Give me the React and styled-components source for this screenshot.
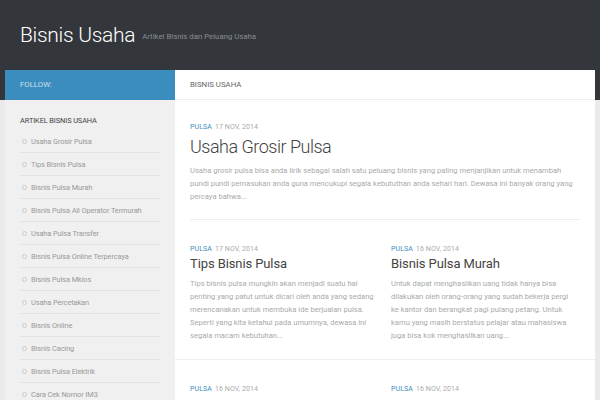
import styled, { createGlobalStyle } from 'styled-components';

const Global = createGlobalStyle`
  html, body {
    margin: 0;
    padding: 0;
  }
  body {
    font-family: Roboto, "Liberation Sans", sans-serif;
    background: #eaeaea;
  }
`;

const Page = styled.div`
  width: 600px;
  height: 400px;
  overflow: hidden;
  background: linear-gradient(#33363b 0, #33363b 100px, #eaeaea 100px);
`;

const Header = styled.header`
  height: 70px;
  display: flex;
  align-items: center;
  padding: 0 20px;
  gap: 7px;
`;

const SiteTitle = styled.h1`
  margin: 0;
  font-size: 21px;
  font-weight: 300;
  color: #fff;
  letter-spacing: -0.3px;
`;

const Tagline = styled.span`
  font-size: 7.8px;
  color: #8a8d91;
  padding-top: 3px;
`;

const Container = styled.div`
  margin: 0 5px;
  display: flex;
  height: 330px;
`;

const Sidebar = styled.aside`
  width: 170px;
  flex: none;
  background: #f0f0f0;
`;

const BarTitle = styled.div`
  height: 30px;
  display: flex;
  align-items: center;
  padding: 0 15px;
  font-size: 7.8px;
  text-transform: uppercase;
  background: ${(p) => (p.$blue ? '#3b8dbd' : '#fff')};
  color: ${(p) => (p.$blue ? 'rgba(255,255,255,0.75)' : '#666')};
  border-bottom: 1px solid ${(p) => (p.$blue ? '#3b8dbd' : '#eee')};
  box-sizing: border-box;
`;

const Widget = styled.div`
  padding: 16px 15px 0;
`;

const WidgetTitle = styled.h3`
  margin: 0 0 5px;
  font-size: 7.4px;
  font-weight: 400;
  color: #444;
  text-transform: uppercase;
  letter-spacing: -0.1px;
`;

const List = styled.ul`
  margin: 0;
  padding: 0;
  list-style: none;
`;

const Item = styled.li`
  display: flex;
  align-items: center;
  gap: 4px;
  height: 23px;
  font-size: 7.4px;
  color: #999;
  border-bottom: 1px solid #e4e4e4;
  box-sizing: border-box;
  padding-left: 2px;
  letter-spacing: -0.1px;
`;

const Bullet = styled.span`
  width: 3px;
  height: 3px;
  border: 1px solid #cacaca;
  border-radius: 50%;
`;

const Main = styled.main`
  flex: 1;
  background: #fff;
`;

const Featured = styled.article`
  margin: 0 15px;
  padding: 23px 0 15px;
  border-bottom: 1px solid #eee;
`;

const Meta = styled.div`
  font-size: 7px;
  color: #aaa;
  text-transform: uppercase;
  letter-spacing: 0.1px;
  span {
    color: #3b8dbd;
    margin-right: 3px;
  }
`;

const Title = styled.h2`
  margin: ${(p) => (p.$big ? '5px 0 7px' : '3px 0 6px')};
  font-size: ${(p) => (p.$big ? '18px' : '13px')};
  font-weight: ${(p) => (p.$big ? 300 : 400)};
  color: #444;
  letter-spacing: ${(p) => (p.$big ? '-0.5px' : '-0.1px')};
`;

const Excerpt = styled.p`
  margin: 0;
  padding-right: ${(p) => (p.$narrow ? '8px' : '0')};
  font-size: 7.6px;
  line-height: 13.2px;
  color: #aaa;
`;

const Row = styled.div`
  display: grid;
  grid-template-columns: 1fr 1fr;
  column-gap: 12px;
  padding: 0 15px;
  border-bottom: 1px solid #eee;
`;

const Post = styled.article`
  padding: 25px 0 16px;
`;

const sideItems = [
  'Usaha Grosir Pulsa',
  'Tips Bisnis Pulsa',
  'Bisnis Pulsa Murah',
  'Bisnis Pulsa All Operator Termurah',
  'Usaha Pulsa Transfer',
  'Bisnis Pulsa Online Terpercaya',
  'Bisnis Pulsa Mkios',
  'Usaha Percetakan',
  'Bisnis Online',
  'Bisnis Cacing',
  'Bisnis Pulsa Elektrik',
  'Cara Cek Nomor IM3',
];

const rows = [
  [
    {
      id: 'tips',
      date: '17 Nov, 2014',
      title: 'Tips Bisnis Pulsa',
      text: 'Tips bisnis pulsa mungkin akan menjadi suatu hal penting yang patut untuk dicari oleh anda yang sedang merencanakan untuk membuka ide berjualan pulsa. Seperti yang kita ketahui pada umumnya, dewasa ini segala macam kebutuhan...',
    },
    {
      id: 'murah',
      date: '16 Nov, 2014',
      title: 'Bisnis Pulsa Murah',
      text: 'Untuk dapat menghasilkan uang tidak hanya bisa dilakukan oleh orang-orang yang sudah bekerja pergi ke kantor dan berangkat pagi pulang petang. Untuk kamu yang masih berstatus pelajar atau mahasiswa juga bisa kok menghasilkan uang...',
      narrow: true,
    },
  ],
  [
    { id: 'c', date: '16 Nov, 2014' },
    { id: 'd', date: '16 Nov, 2014' },
  ],
];

export default function App() {
  return (
    <Page>
      <Global />
      <Header>
        <SiteTitle>Bisnis Usaha</SiteTitle>
        <Tagline>Artikel Bisnis dan Peluang Usaha</Tagline>
      </Header>
      <Container>
        <Sidebar>
          <BarTitle $blue>Follow:</BarTitle>
          <Widget>
            <WidgetTitle>Artikel Bisnis Usaha</WidgetTitle>
            <List>
              {sideItems.map((t) => (
                <Item key={t}>
                  <Bullet />
                  {t}
                </Item>
              ))}
            </List>
          </Widget>
        </Sidebar>
        <Main>
          <BarTitle>Bisnis Usaha</BarTitle>
          <Featured>
            <Meta>
              <span>Pulsa</span>17 Nov, 2014
            </Meta>
            <Title $big>Usaha Grosir Pulsa</Title>
            <Excerpt>
              Usaha grosir pulsa bisa anda lirik sebagai salah satu peluang bisnis yang paling
              menjanjikan untuk menambah pundi pundi pemasukan anda guna mencukupi segala
              kebututhan anda sehari hari. Dewasa ini banyak orang yang percaya bahwa...
            </Excerpt>
          </Featured>
          {rows.map((row, i) => (
            <Row key={i}>
              {row.map((p) => (
                <Post key={p.id}>
                  <Meta>
                    <span>Pulsa</span>
                    {p.date}
                  </Meta>
                  {p.title && <Title>{p.title}</Title>}
                  {p.text && <Excerpt $narrow={p.narrow}>{p.text}</Excerpt>}
                </Post>
              ))}
            </Row>
          ))}
        </Main>
      </Container>
    </Page>
  );
}
